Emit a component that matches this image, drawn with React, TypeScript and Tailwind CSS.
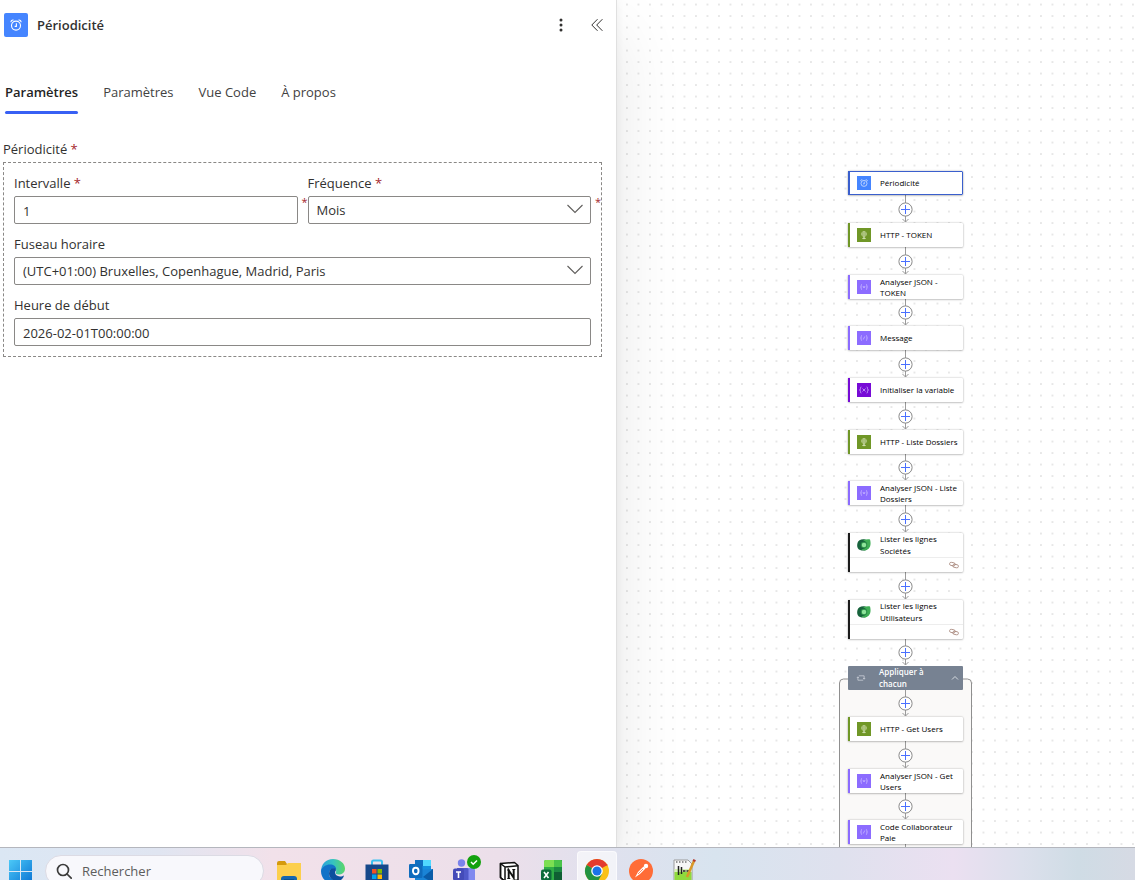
import type { ReactNode } from 'react';

type Kind = 'recurrence' | 'http' | 'parse' | 'compose' | 'variable' | 'dataverse';

interface FlowNode {
  kind: Kind;
  label: string;
  /** top of the card on the canvas */
  y: number;
  /** card with a connection footer */
  tall?: boolean;
  selected?: boolean;
}

const NODES: FlowNode[] = [
  { kind: 'recurrence', label: 'Périodicité', y: 171, selected: true },
  { kind: 'http', label: 'HTTP - TOKEN', y: 223 },
  { kind: 'parse', label: 'Analyser JSON - TOKEN', y: 275 },
  { kind: 'compose', label: 'Message', y: 326 },
  { kind: 'variable', label: 'Initialiser la variable', y: 378 },
  { kind: 'http', label: 'HTTP - Liste Dossiers', y: 430 },
  { kind: 'parse', label: 'Analyser JSON - Liste Dossiers', y: 481 },
  { kind: 'dataverse', label: 'Lister les lignes Sociétés', y: 533, tall: true },
  { kind: 'dataverse', label: 'Lister les lignes Utilisateurs', y: 600, tall: true },
  { kind: 'http', label: 'HTTP - Get Users', y: 717 },
  { kind: 'parse', label: 'Analyser JSON - Get Users', y: 769 },
  { kind: 'compose', label: 'Code Collaborateur Paie', y: 820 },
];

// [bottom of the source, top of the target]
const EDGES = [
  [195, 223],
  [247, 275],
  [299, 326],
  [350, 378],
  [402, 430],
  [454, 481],
  [505, 533],
  [572, 600],
  [639, 666],
  [690, 717],
  [741, 769],
  [793, 820],
];

const BAR: Record<Kind, string> = {
  recurrence: 'bg-[#3a5fcd]',
  http: 'bg-[#709727]',
  parse: 'bg-[#8c6cff]',
  compose: 'bg-[#8c6cff]',
  variable: 'bg-[#770bd6]',
  dataverse: 'bg-[#1b1b1b]',
};

export default function App() {
  return (
    <div className="flex h-screen flex-col overflow-hidden bg-white font-['Open_Sans','Noto_Sans',sans-serif] text-[13px] leading-5 text-[#323130]">
      <main className="flex min-h-0 flex-1 overflow-hidden">
        <Panel />
        <Canvas />
      </main>
      <Taskbar />
    </div>
  );
}

function Panel() {
  return (
    <section className="relative z-10 w-[617px] shrink-0 border-r border-[#e0e0e0] bg-white pl-[3px] pr-3.5 shadow-[0_0_8px_rgba(0,0,0,0.06),0_32px_64px_rgba(0,0,0,0.1)]">
      <header className="flex h-[50px] items-center pl-px">
        <span className="flex size-6 items-center justify-center rounded-xs bg-[#4585ff] text-white">
          <AlarmGlyph className="size-3" />
        </span>
        <h1 className="ml-[9px] flex-1 font-semibold">Périodicité</h1>
        <button type="button" aria-label="Plus" className="flex size-6 items-center justify-center">
          <svg viewBox="0 0 16 16" className="size-4" fill="currentColor">
            <circle cx="8" cy="3" r="1.5" />
            <circle cx="8" cy="8" r="1.5" />
            <circle cx="8" cy="13" r="1.5" />
          </svg>
        </button>
        <button type="button" aria-label="Réduire" className="-mr-[7px] ml-3 flex size-6 items-center justify-center">
          <svg viewBox="0 0 16 16" className="size-4" fill="none" stroke="currentColor" strokeWidth="1">
            <path d="M8.5 2.2 2.8 8l5.7 5.8M13.4 2.2 7.7 8l5.7 5.8" />
          </svg>
        </button>
      </header>

      <nav className="mt-7 flex gap-[25px] pl-0.5">
        <Tab active>Paramètres</Tab>
        <Tab>Paramètres</Tab>
        <Tab>Vue Code</Tab>
        <Tab>À propos</Tab>
      </nav>

      <form className="mt-[25px]">
        <fieldset>
          <legend className="mb-[3px]">
            Périodicité <Star />
          </legend>
          <div className="grid grid-cols-2 gap-2.5 border border-dashed border-[#8a8886] p-2.5">
            <Field id="interval" label="Intervalle" required>
              <TextBox id="interval" value="1" />
            </Field>
            <Field id="frequency" label="Fréquence" required>
              <Dropdown id="frequency" value="Mois" />
            </Field>
            <div className="col-span-2">
              <Field id="timezone" label="Fuseau horaire">
                <Dropdown id="timezone" value="(UTC+01:00) Bruxelles, Copenhague, Madrid, Paris" />
              </Field>
            </div>
            <div className="col-span-2">
              <Field id="start" label="Heure de début">
                <TextBox id="start" value="2026-02-01T00:00:00" />
              </Field>
            </div>
          </div>
        </fieldset>
      </form>
    </section>
  );
}

function Tab({ active, children }: { active?: boolean; children: ReactNode }) {
  return (
    <button
      type="button"
      className={`flex flex-col ${active ? 'font-semibold text-[#242424]' : 'text-[#424242]'}`}
    >
      <span className="h-[33px] pt-1">{children}</span>
      <span className={`h-[3px] w-full rounded-full ${active ? 'bg-[#3860f4]' : ''}`} />
    </button>
  );
}

function Star() {
  return <span className="text-[#a4262c]">*</span>;
}

function Field({
  id,
  label,
  required,
  children,
}: {
  id: string;
  label: string;
  required?: boolean;
  children: ReactNode;
}) {
  return (
    <div>
      <label htmlFor={id} className="mb-[3px] block">
        {label} {required && <Star />}
      </label>
      <div className="relative">
        {children}
        {required && <span className="absolute -top-1 left-full ml-1 text-[11px] text-[#a4262c]">*</span>}
      </div>
    </div>
  );
}

function TextBox({ id, value }: { id: string; value: string }) {
  return (
    <input
      id={id}
      type="text"
      defaultValue={value}
      className="block h-7 w-full rounded-xs border border-[#8a8886] px-2 pt-0.5 outline-none"
    />
  );
}

function Dropdown({ id, value }: { id: string; value: string }) {
  return (
    <>
      <select
        id={id}
        defaultValue={value}
        className="block h-7 w-full appearance-none rounded-xs border border-[#8a8886] bg-white px-2 outline-none"
      >
        <option>{value}</option>
      </select>
      <svg
        viewBox="0 0 16 16"
        className="pointer-events-none absolute top-1.5 right-2 size-4"
        fill="none"
        stroke="#605e5c"
        strokeWidth="1.1"
      >
        <path d="M.5 3 8 10.5 15.5 3" />
      </svg>
    </>
  );
}

function Canvas() {
  return (
    <section className="relative flex-1 overflow-hidden border-l border-white bg-white text-[8px]">
      <svg className="absolute inset-0 size-full">
        <defs>
          <pattern id="dots" x="3.2" y="-1.2" width="11.5" height="11.5" patternUnits="userSpaceOnUse">
            <circle cx="5.75" cy="5.75" r=".65" fill="#bcbcbc" />
          </pattern>
        </defs>
        <rect width="100%" height="100%" fill="url(#dots)" />
        {/* loop container */}
        <rect x="221.5" y="679" width="132" height="300" rx="4" fill="#faf9f8" stroke="#8f8f8f" />
        {EDGES.map(([from, to]) => (
          <g key={from} fill="none" stroke="#9b9b9b" strokeWidth="1">
            <path d={`M287.5 ${from}V${to - 1}M284.5 ${to - 4}l3 3 3-3`} />
            <circle cx="287.5" cy={to - 13.5} r="6.6" fill="#fff" stroke="#8a8a8a" />
            <path d={`M283 ${to - 13.5}h9M287.5 ${to - 18}v9`} stroke="#4a70ff" />
          </g>
        ))}
        <path d="M287.5 844v6" stroke="#9b9b9b" />
      </svg>

      {NODES.map((n) => (
        <Card key={n.y} node={n} />
      ))}

      <div className="absolute top-[666px] left-[230px] flex h-6 w-[115px] items-center rounded-[1px] bg-[#778292] pr-1 pl-2 font-semibold text-white">
        <svg viewBox="0 0 16 16" className="size-2.5" fill="none" stroke="#c9ced6" strokeWidth="1.3">
          <path d="M4.500 4.500h8.500v5M3 6.500v5h8.500M1.500 8l1.500-2 1.500 2M11.500 8l1.500 2 1.500-2" />
        </svg>
        <span className="ml-[13px] w-14 leading-[12px]">Appliquer à chacun</span>
        <svg viewBox="0 0 8 8" className="ml-auto size-2" fill="none" stroke="#dfe3e8" strokeWidth=".9">
          <path d="M1 5.500 4 2.500l3 3" />
        </svg>
      </div>
    </section>
  );
}

function Card({ node }: { node: FlowNode }) {
  return (
    <div
      className={`absolute left-[230px] w-[115px] rounded-[1px] bg-white font-medium text-black shadow-[0_0_2px_rgba(0,0,0,0.3),0_1px_2px_rgba(0,0,0,0.16)] ${
        node.tall ? 'h-[39px]' : 'h-6'
      } ${node.selected ? 'outline outline-offset-[-1px] outline-[#3a5fcd]' : ''}`}
      style={{ top: node.y }}
    >
      <div className="flex h-full overflow-hidden">
        <span className={`w-0.5 shrink-0 ${BAR[node.kind]}`} />
        <div className="flex-1">
          <div className="flex h-6 items-center pb-px pl-[7px]">
            <NodeIcon kind={node.kind} />
            <span className={`ml-[9px] w-[82px] ${node.tall ? 'pr-4 leading-[12px]' : 'leading-[11px]'}`}>
              {node.label}
            </span>
          </div>
          {node.tall && (
            <div className="flex h-[15px] items-center justify-end border-t border-[#ededed] pr-1">
              <svg viewBox="0 0 16 12" className="h-2 w-2.5" fill="none" stroke="#a07c70" strokeWidth="1.2">
                <rect x="1" y="2" width="9" height="5" rx="2.500" transform="rotate(12 5 4)" />
                <rect x="6" y="5" width="9" height="5" rx="2.500" transform="rotate(12 10 8)" />
              </svg>
            </div>
          )}
        </div>
      </div>
    </div>
  );
}

function NodeIcon({ kind }: { kind: Kind }) {
  if (kind === 'recurrence') {
    return (
      <span className="flex size-3.5 shrink-0 items-center justify-center bg-[#4585ff] text-white/80">
        <AlarmGlyph className="size-2" />
      </span>
    );
  }
  if (kind === 'dataverse') {
    return (
      <svg viewBox="0 0 28 28" className="size-3.5 shrink-0">
        <path d="M1 10C2 3 14 0 20 5v18C17 26 5 26 2 21 0 18 0 14 1 10z" fill="#17633c" />
        <path d="M26 3c2 7 2 16-5 20-5 3-10 2-12-1 5 1 10-2 11-8 0-5-3-8-8-9 5-2 10-3 14-2z" fill="#3fae55" />
        <circle cx="14" cy="14" r="6.500" fill="#2c8f49" />
        <circle cx="14" cy="14" r="4.500" fill="#8fe39b" />
      </svg>
    );
  }
  if (kind === 'http') {
    return (
      <svg viewBox="0 0 28 28" className="size-3.5 shrink-0" fill="none" stroke="#d5e2b8" strokeWidth="1.1">
        <rect width="28" height="28" fill="#709727" stroke="none" />
        <circle cx="14" cy="12" r="5" />
        <path d="M9 12h10M14 7v10M14 7c-3 3-3 7 0 10M14 7c3 3 3 7 0 10M14 17v4M10 21h8" />
        <circle cx="14" cy="20.500" r="1.500" fill="#d5e2b8" />
      </svg>
    );
  }
  const purple = kind === 'variable' ? '#770bd6' : '#8c6cff';
  return (
    <svg viewBox="0 0 28 28" className="size-3.5 shrink-0" fill="none" stroke="#d9ccff" strokeWidth="1.3">
      <rect width="28" height="28" fill={purple} stroke="none" />
      {kind === 'variable' ? (
        <path
          d="M9 8c-3 0-2 2-2 4 0 1-1 2-2 2 1 0 2 1 2 2 0 2-1 4 2 4M19 8c3 0 2 2 2 4 0 1 1 2 2 2-1 0-2 1-2 2 0 2 1 4-2 4M11 11l6 6M17 11l-6 6"
        />
      ) : (
        <path d="M10 9c-2 0-1.500 2-1.500 3.500S7.500 14 7 14c.5 0 1.500 0 1.500 1.500S8 19 10 19M18 9c2 0 1.500 2 1.500 3.500S20.500 14 21 14c-.5 0-1.500 0-1.500 1.500S20 19 18 19" />
      )}
      {kind === 'parse' && <path d="m12 12 2 4 2-4" />}
      {kind === 'compose' && <path d="m12.500 17 3-6" />}
    </svg>
  );
}

function AlarmGlyph({ className }: { className: string }) {
  return (
    <svg viewBox="0 0 16 16" className={className} fill="none" stroke="currentColor" strokeWidth="1.5">
      <circle cx="8" cy="8.800" r="6" />
      <path d="M8.500 5.500v4.300H6.200M1.200 4.200C1.200 2.200 3 1 4.600 1.500M14.800 4.200c0-2-1.800-3.200-3.400-2.700" />
    </svg>
  );
}

function Taskbar() {
  return (
    <footer className="h-[33px] shrink-0 overflow-hidden border-t border-[#b4b6bd] bg-[linear-gradient(90deg,#dbe7f4_0%,#e0e5f1_14%,#f2e1ea_24%,#ecdfea_44%,#dfe1ee_54%,#d8e4ef_63%,#dfe1ee_74%,#ebe0f1_84%,#dce0ec_90%,#cfdce5_95%,#d6dae4_100%)]">
      <div className="flex h-[46px] items-center">
        <button type="button" aria-label="Démarrer" className="ml-[9px]">
          <svg viewBox="0 0 24 24" className="size-6">
            <defs>
              <linearGradient id="win" x1="0" y1="0" x2="1" y2="1" gradientUnits="objectBoundingBox">
                <stop offset="0" stopColor="#4cc9f7" />
                <stop offset="1" stopColor="#0a74d4" />
              </linearGradient>
            </defs>
            <path d="M0 1h11v11H0zM12 1h11v11H12zM0 13h11v11H0zM12 13h11v11H12z" fill="url(#win)" />
          </svg>
        </button>
        <label className="ml-3 flex h-8 w-[219px] items-center rounded-full border border-[#dcdbe4] bg-[#f8f8fc] pl-2.5">
          <svg viewBox="0 0 16 16" className="size-4" fill="none" stroke="#3b3b3b" strokeWidth="1.7">
            <circle cx="7" cy="7" r="5.500" />
            <path d="m11 11 4.200 4.200" strokeLinecap="round" />
          </svg>
          <input
            type="text"
            aria-label="Rechercher"
            placeholder="Rechercher"
            className="ml-2.5 w-36 outline-none placeholder:text-[#5d5d5d]"
          />
        </label>
        <div className="ml-[3px] flex">
          <AppButton name="Explorateur">
            <path d="M0 4q0-2 2-2h6l2 3h14v19H0z" fill="#d59a0d" />
            <path d="M0 6h9l2-2h13v20H0z" fill="#fccf4d" />
            <path d="M4 24v-4q0-3 3-3h10q3 0 3 3v4z" fill="#1467b0" />
            <path d="M7 21h10" stroke="#0a4a86" strokeWidth="1.500" />
          </AppButton>
          <AppButton name="Edge">
            <defs>
              <linearGradient id="edge" x1="0" y1="0" x2="1" y2="0">
                <stop offset="0" stopColor="#2a9fdc" />
                <stop offset=".5" stopColor="#36c3c0" />
                <stop offset="1" stopColor="#5bd767" />
              </linearGradient>
            </defs>
            <path d="M0 13C0 5 5 0 12 0c7 0 12 4.500 12 9.500 0 4-3 6-6.500 6-2.500 0-3.500-1-2.500-2.500 1-3-1.500-5-5-5C5 8 1 10 0 13z" fill="url(#edge)" />
            <path d="M0 12c1-4 5-6.500 9-6.500 4 0 6.500 2.500 6 5-3-2-7 0-7 4 0 5 5 8 11 6-2 2.500-5 3.500-7.500 3.500C5 24 0 19 0 12z" fill="#1172c8" />
            <path d="M8 14.500c0-4 3-6 6-5 1 .5 1.200 1.500.6 2.500-1.600 2 .4 5.500 4.400 5.500 2 0 3-.5 4-1-1 3-2 4-4 5-6 2-11-2-11-7z" fill="#0c4f9e" />
          </AppButton>
          <AppButton name="Microsoft Store">
            <path d="M7 6V3q0-1.500 1.500-1.500h7Q17 1.500 17 3v3" fill="none" stroke="#3cc1f1" strokeWidth="2" />
            <path d="M.5 5.500h23V21q0 3-3 3h-17q-3 0-3-3z" fill="#16488a" />
            <path d="M7 10h4.500v4.500H7z" fill="#f25022" />
            <path d="M12.500 10H17v4.500h-4.500z" fill="#7fba00" />
            <path d="M7 15.500h4.500V20H7z" fill="#00a4ef" />
            <path d="M12.500 15.500H17V20h-4.500z" fill="#ffb900" />
          </AppButton>
          <AppButton name="Outlook">
            <path d="M6 1h16v12H6z" fill="#1490df" />
            <path d="M14 1h8v6h-8z" fill="#50d9ff" />
            <path d="M6 1h8v6H6z" fill="#0f6fc0" />
            <path d="M6 11l18-1v14H6z" fill="#1a84d6" />
            <path d="m24 10-10 8 10 6z" fill="#0a5ca8" />
            <rect y="5" width="13.500" height="14" rx="1.200" fill="#0f6cbd" />
            <ellipse cx="6.750" cy="12" rx="2.800" ry="3.200" fill="none" stroke="#fff" strokeWidth="1.900" />
          </AppButton>
          <AppButton name="Teams">
            <circle cx="8.500" cy="4" r="3.700" fill="#7a83eb" />
            <path d="M12 9h8q2 0 2 2v13H8z" fill="#8089ef" />
            <path d="M4 9h10q1.500 0 1.500 1.500V24H5z" fill="#5059c9" />
            <rect y="9.500" width="11" height="12" rx="2" fill="#444bb8" />
            <path d="M3 13h5M5.500 13v6" stroke="#fff" strokeWidth="1.600" />
            <circle cx="21" cy="3" r="7" fill="#13a10e" />
            <path d="m18 3 2.200 2.200L24 1.500" fill="none" stroke="#fff" strokeWidth="1.500" />
          </AppButton>
          <AppButton name="Notion">
            <path d="M3.500 4.500 17.500 3.500 21 6.500V21L8 22.500l-4.500-4z" fill="#fff" stroke="#111" strokeWidth="1.500" strokeLinejoin="round" />
            <path d="M3.500 4.500 8 8v14.500l-4.500-4zM3.500 4.500 8 8l13-1.200" fill="none" stroke="#111" strokeWidth="1.500" strokeLinejoin="round" />
            <path d="M11.700 19.500v-8.300l5 7.600v-8.300" fill="none" stroke="#111" strokeWidth="1.900" />
            <path d="M10 11h2.500M10.300 19.500h3M15.300 10.500h3" stroke="#111" strokeWidth="1.200" />
          </AppButton>
          <AppButton name="Excel">
            <path d="M3 3q0-2 2-2h16v23H3z" fill="#2fae45" />
            <path d="M3 3q0-2 2-2h8v7H3z" fill="#7ddf52" />
            <path d="M13 1h6.500Q21 1 21 3v5h-8z" fill="#49c349" />
            <path d="M13 8h8v16h-8z" fill="#0f5f33" />
            <path d="M13 8h8v5h-8z" fill="#1c8a42" />
            <rect y="10.500" width="10.500" height="11" rx="2" fill="#0e6b3b" />
            <path d="m3 13 4.500 6M7.500 13 3 19" stroke="#fff" strokeWidth="1.600" />
          </AppButton>
          <AppButton name="Chrome" active>
            <circle cx="12" cy="12" r="12" fill="#fbc116" />
            <path d="M12 12 1.600 6A12 12 0 0 1 22.400 6z" fill="#e33b2e" />
            <path d="M12 12 1.600 6A12 12 0 0 0 12 24l5-9z" fill="#229342" />
            <path d="M12 6h10.400" stroke="#e33b2e" strokeWidth="1" />
            <circle cx="12" cy="12" r="5.800" fill="#fff" />
            <circle cx="12" cy="12" r="4.500" fill="#1a73e8" />
          </AppButton>
          <AppButton name="Postman">
            <circle cx="12" cy="12" r="12" fill="#ff6c37" />
            <path d="M6 18.500 9 13l5.500-5.500 2 2L11 15z" fill="#fff" />
            <circle cx="17" cy="7" r="2.200" fill="#fff" />
            <path d="m9 15 5-5" stroke="#ff6c37" strokeWidth=".8" />
          </AppButton>
          <AppButton name="Notepad++">
            <path d="M1 1h14l4 4v19H1z" fill="#f7f7f7" stroke="#9a9a9a" />
            <path d="M1.500 13h17v11h-17z" fill="#8fdb3d" />
            <path d="M1.500 10h17v3h-17z" fill="#d8f3b4" />
            <path d="M3 3h12" stroke="#777" strokeDasharray="1.500 1.500" strokeWidth="1.500" />
            <path d="M5.500 7v9M8.500 8v7M10 12h2.500M13.500 12H16" fill="none" stroke="#222" strokeWidth="1.500" />
            <path d="M21 2 14 18" stroke="#d9982a" strokeWidth="2.500" />
            <path d="m20 1 2.500 1.200" stroke="#b3372b" strokeWidth="2" />
          </AppButton>
        </div>
      </div>
    </footer>
  );
}

function AppButton({ name, active, children }: { name: string; active?: boolean; children: ReactNode }) {
  return (
    <button type="button" aria-label={name} className="flex h-12 w-11 items-center justify-center">
      <span
        className={`flex size-10 items-center justify-center rounded-sm ${
          active ? 'border border-white/60 bg-white/60' : ''
        }`}
      >
        <svg viewBox="0 0 24 24" className="size-6 overflow-visible">
          {children}
        </svg>
      </span>
    </button>
  );
}
